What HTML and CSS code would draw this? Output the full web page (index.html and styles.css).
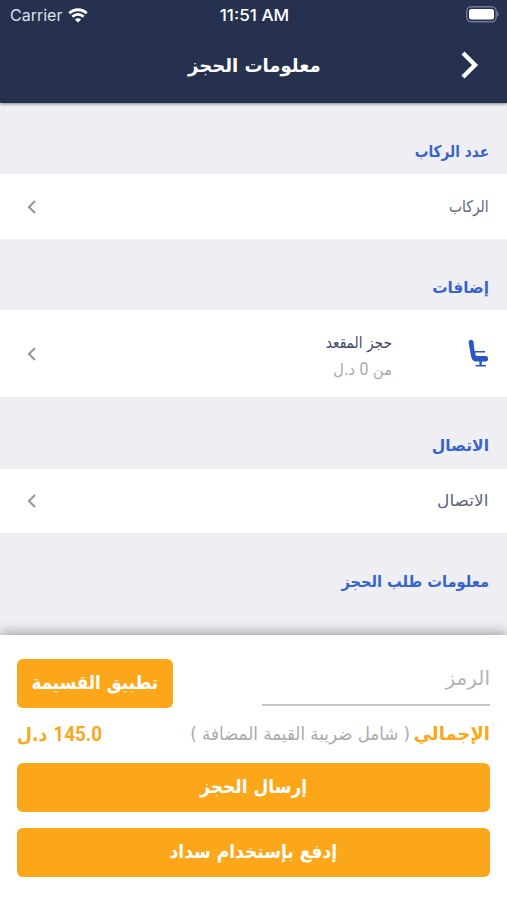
FILE: index.html
```html
<!DOCTYPE html>
<html lang="ar" dir="rtl">
<head>
<meta charset="utf-8">
<title>معلومات الحجز</title>
<link rel="stylesheet" href="styles.css">
</head>
<body>
<div class="screen">
  <header class="header">
    <div class="status" dir="ltr">
      <div class="carrier"><span>Carrier</span>
        <svg width="20" height="15" viewBox="0 0 20 15" fill="none" stroke="#fff" stroke-width="2.8"><path d="M1.300 5.300a12.400 12.400 0 0 1 17.400 0M4.400 8.700a8 8 0 0 1 11.200 0"/><path d="M10 14.600 6.900 11.500a4.400 4.400 0 0 1 6.200 0z" fill="#fff" stroke="none"/></svg>
      </div>
      <div class="clock">11:51 AM</div>
      <svg class="battery" width="33" height="17" viewBox="0 0 33 17"><rect x=".8" y=".8" width="29.400" height="15" rx="4.500" fill="none" stroke="#707a92" stroke-width="1.400"/><rect x="3" y="3" width="25" height="10.600" rx="2.500" fill="#fff"/><path d="M31.200 5.600c2 .6 2 4.800 0 5.400z" fill="#707a92"/></svg>
    </div>
    <div class="nav">
      <svg class="back" width="18" height="28" viewBox="0 0 18 28" fill="none" stroke="#fff" stroke-width="4.300"><path d="M2 2l12 12L2 26"/></svg>
      <h1 class="title">معلومات الحجز</h1>
    </div>
  </header>
  <main class="content">
    <h2 class="section narrow">عدد الركاب</h2>
    <div class="row"><span class="label passengers">الركاب</span><svg class="chev" width="10" height="14" viewBox="0 0 10 14"><path d="M8 1 2 7l6 6"/></svg></div>
    <h2 class="section extras">إضافات</h2>
    <div class="row seat-row">
      <svg class="seat" width="21" height="29" viewBox="0 0 21 29" fill="#2857c5"><path d="M.6 3.500C.4-.2 5.400-.2 5.600 3.200l.9 8.800H17v1.500H7.200l.5 3 1.800.5h8.200c3.200 0 3.200 5.500 0 5.500H8.700c-3.500 0-4.800-2-5.600-5z"/><path d="M11.400 22h2.400v4h-2.400zM7.500 26h10.500v1.600H7.500z"/></svg>
      <div class="seat-info"><span class="label dark">حجز المقعد</span><span class="price-from">من <span class="num">0</span> د.ل</span></div>
      <svg class="chev" width="10" height="14" viewBox="0 0 10 14"><path d="M8 1 2 7l6 6"/></svg>
    </div>
    <h2 class="section contact">الاتصال</h2>
    <div class="row contact-row"><span class="label reach">الاتصال</span><svg class="chev" width="10" height="14" viewBox="0 0 10 14"><path d="M8 1 2 7l6 6"/></svg></div>
    <h2 class="section request">معلومات طلب الحجز</h2>
  </main>
  <footer class="panel">
    <div class="coupon">
      <div class="code">الرمز</div>
      <div class="btn apply"><span>تطبيق القسيمة</span></div>
    </div>
    <div class="total">
      <div class="total-label"><b>الإجمالي</b><span class="tax">( شامل ضريبة القيمة المضافة )</span></div>
      <div class="amount"><span class="num">145.0</span> <span>د.ل</span></div>
    </div>
    <div class="btn submit"><span>إرسال الحجز</span></div>
    <div class="btn sadad"><span>إدفع بإستخدام سداد</span></div>
  </footer>
</div>
</body>
</html>
```
FILE: styles.css
```css
*{box-sizing:border-box}
body{margin:0;background:#fff;font-family:"DejaVu Sans",sans-serif}
svg{display:block;flex:none}
h1,h2{margin:0}
span,b,h1,h2,.code{white-space:nowrap}
.screen{width:506.500px;height:900px;margin-right:.5px;background:#efeef3;display:flex;flex-direction:column;overflow:hidden}
.header{height:103px;flex:none;background:#25314f;box-shadow:0 1px 3px rgba(0,0,0,.45);position:relative}
.status{height:30px;display:grid;grid-template-columns:1fr auto 1fr;align-items:center;padding:0 8px 0 10px;color:#fff;font:500 16px/30px Inter,sans-serif}
.clock{transform:scaleX(1.070)}
.carrier{display:flex;gap:7px;align-items:center;color:#dce0e8;font-weight:400}
.carrier svg{margin-left:-1px}
.battery{justify-self:end;transform:translateY(-1px)}
.nav{height:70px;display:grid;grid-template-columns:60px 1fr 60px;align-items:center}
.back{margin-right:28px}
.title{font-size:19px;line-height:30px;color:#fff;text-align:center;transform:translateX(1px) scaleX(.95)}
.content{flex:1}
.section{height:71px;margin-right:17.500px;padding-top:34px;font-size:16px;line-height:30px;color:#3765cd;transform-origin:right}
.narrow{transform:scaleX(.856)}
.extras{transform:scaleX(.955)}
.contact{height:72px;transform:scaleX(.970)}
.request{transform:scaleX(.913)}
.row{height:65px;background:#fff;display:flex;align-items:center;justify-content:space-between;padding:0 18px 0 27px}
.seat-row{height:87px}
.contact-row{height:64px}
.label{font-size:16px;line-height:26px;color:#60647a;transform-origin:right}
.passengers{transform:scaleX(.870)}
.reach{transform:scaleX(1.060)}
.label.dark{color:#444b68;transform:translateY(3px) scaleX(.86)}
.chev{fill:none;stroke:#999;stroke-width:2.200}
.seat-info{margin:0 76px 0 auto;display:flex;flex-direction:column}
.price-from{font-size:16px;line-height:26px;color:#aaa;transform-origin:right;transform:translateY(3px) scaleX(.906)}
.num{font-family:Roboto,sans-serif;font-size:1.100em}
.panel{height:265px;flex:none;background:#fff;box-shadow:0 -2px 12px rgba(0,0,0,.35);padding:24px 16.500px 0 17px;position:relative}
.coupon{display:flex;justify-content:space-between;height:49px}
.code{width:228px;height:47px;border-bottom:2px solid #c5c5c5;font-size:20px;line-height:39px;color:#b5b5b5}
.btn{height:49px;border-radius:6px;background:#fca71a;color:#fff;font-size:19px;font-weight:700;line-height:47px;text-align:center}
.btn span{display:inline-block;transform:scaleX(.897)}
.apply{width:156px}
.apply span{margin:0 -10px;transform:scaleX(.882)}
.total{height:55px;display:flex;justify-content:space-between;line-height:52px}
.total-label{display:flex;gap:4px;color:#fca71a;font-size:18px}
.tax{color:#aaa;font-size:18px;transform:scaleX(.927);transform-origin:right}
.amount{color:#f9a722;font-size:19px;font-weight:700;transform:scaleX(.905);transform-origin:left}
.sadad{margin-top:16px}
```
